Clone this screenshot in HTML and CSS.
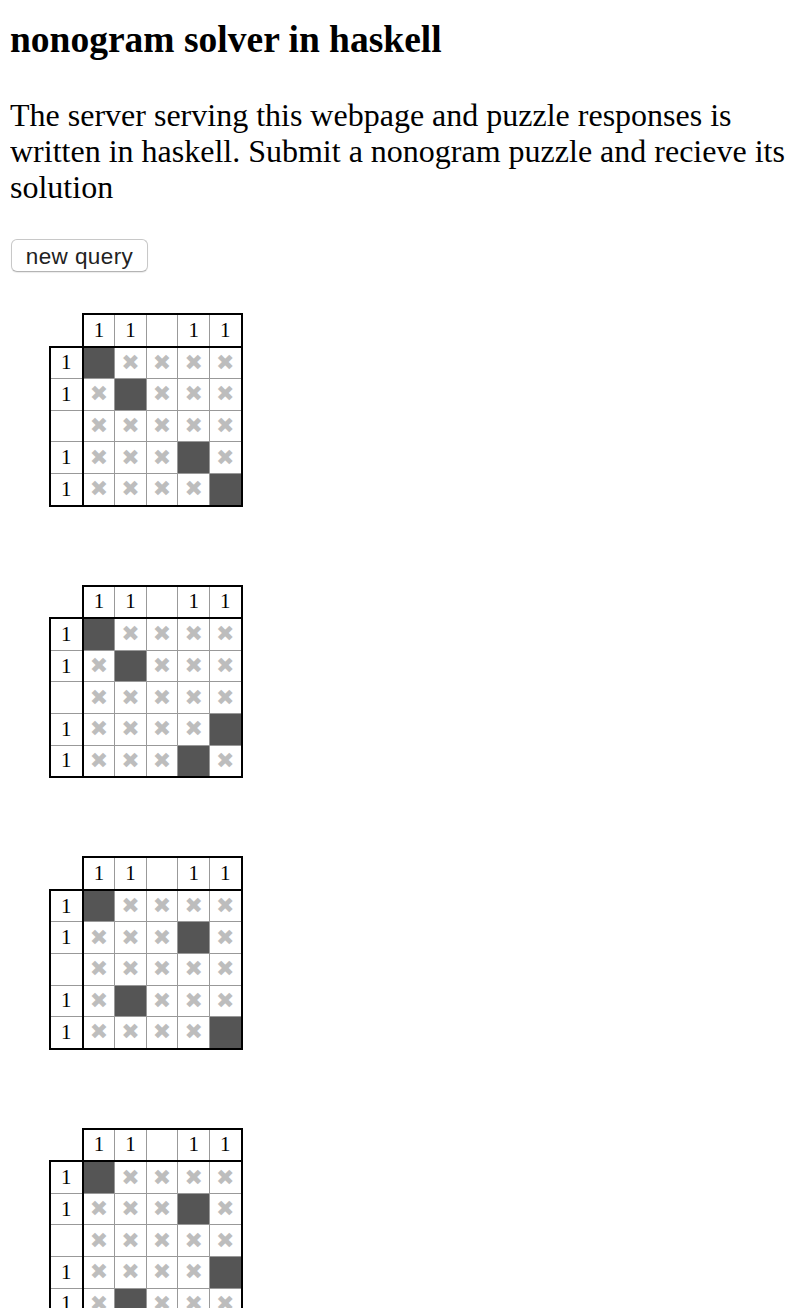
FILE: index.html
```html
<!DOCTYPE html>
<html lang="en">
  <head>
    <meta charset="UTF-8" />
    <meta name="viewport" content="width=device-width, initial-scale=1.0" />
    <title>nonogram solver</title>
    <link rel="stylesheet" href="styles.css">
  </head>
  <body>
    <h1>nonogram solver in haskell</h1>
    <p class="intro">
      The server serving this webpage and puzzle responses is written in
      haskell. Submit a nonogram puzzle and recieve its solution
    </p>
    <button class="query">new query</button>

    <section id="losninger">
      <table class="nono">
        <tr><th class="hjorne"></th><th class="kol">1</th><th class="kol">1</th><th class="kol"></th><th class="kol">1</th><th class="kol">1</th></tr>
        <tr><th class="rk">1</th><td class="fyld"></td><td class="kryds">✖</td><td class="kryds">✖</td><td class="kryds">✖</td><td class="kryds">✖</td></tr>
        <tr><th class="rk">1</th><td class="kryds">✖</td><td class="fyld"></td><td class="kryds">✖</td><td class="kryds">✖</td><td class="kryds">✖</td></tr>
        <tr><th class="rk"></th><td class="kryds">✖</td><td class="kryds">✖</td><td class="kryds">✖</td><td class="kryds">✖</td><td class="kryds">✖</td></tr>
        <tr><th class="rk">1</th><td class="kryds">✖</td><td class="kryds">✖</td><td class="kryds">✖</td><td class="fyld"></td><td class="kryds">✖</td></tr>
        <tr><th class="rk">1</th><td class="kryds">✖</td><td class="kryds">✖</td><td class="kryds">✖</td><td class="kryds">✖</td><td class="fyld"></td></tr>
      </table>

      <table class="nono">
        <tr><th class="hjorne"></th><th class="kol">1</th><th class="kol">1</th><th class="kol"></th><th class="kol">1</th><th class="kol">1</th></tr>
        <tr><th class="rk">1</th><td class="fyld"></td><td class="kryds">✖</td><td class="kryds">✖</td><td class="kryds">✖</td><td class="kryds">✖</td></tr>
        <tr><th class="rk">1</th><td class="kryds">✖</td><td class="fyld"></td><td class="kryds">✖</td><td class="kryds">✖</td><td class="kryds">✖</td></tr>
        <tr><th class="rk"></th><td class="kryds">✖</td><td class="kryds">✖</td><td class="kryds">✖</td><td class="kryds">✖</td><td class="kryds">✖</td></tr>
        <tr><th class="rk">1</th><td class="kryds">✖</td><td class="kryds">✖</td><td class="kryds">✖</td><td class="kryds">✖</td><td class="fyld"></td></tr>
        <tr><th class="rk">1</th><td class="kryds">✖</td><td class="kryds">✖</td><td class="kryds">✖</td><td class="fyld"></td><td class="kryds">✖</td></tr>
      </table>

      <table class="nono">
        <tr><th class="hjorne"></th><th class="kol">1</th><th class="kol">1</th><th class="kol"></th><th class="kol">1</th><th class="kol">1</th></tr>
        <tr><th class="rk">1</th><td class="fyld"></td><td class="kryds">✖</td><td class="kryds">✖</td><td class="kryds">✖</td><td class="kryds">✖</td></tr>
        <tr><th class="rk">1</th><td class="kryds">✖</td><td class="kryds">✖</td><td class="kryds">✖</td><td class="fyld"></td><td class="kryds">✖</td></tr>
        <tr><th class="rk"></th><td class="kryds">✖</td><td class="kryds">✖</td><td class="kryds">✖</td><td class="kryds">✖</td><td class="kryds">✖</td></tr>
        <tr><th class="rk">1</th><td class="kryds">✖</td><td class="fyld"></td><td class="kryds">✖</td><td class="kryds">✖</td><td class="kryds">✖</td></tr>
        <tr><th class="rk">1</th><td class="kryds">✖</td><td class="kryds">✖</td><td class="kryds">✖</td><td class="kryds">✖</td><td class="fyld"></td></tr>
      </table>

      <table class="nono">
        <tr><th class="hjorne"></th><th class="kol">1</th><th class="kol">1</th><th class="kol"></th><th class="kol">1</th><th class="kol">1</th></tr>
        <tr><th class="rk">1</th><td class="fyld"></td><td class="kryds">✖</td><td class="kryds">✖</td><td class="kryds">✖</td><td class="kryds">✖</td></tr>
        <tr><th class="rk">1</th><td class="kryds">✖</td><td class="kryds">✖</td><td class="kryds">✖</td><td class="fyld"></td><td class="kryds">✖</td></tr>
        <tr><th class="rk"></th><td class="kryds">✖</td><td class="kryds">✖</td><td class="kryds">✖</td><td class="kryds">✖</td><td class="kryds">✖</td></tr>
        <tr><th class="rk">1</th><td class="kryds">✖</td><td class="kryds">✖</td><td class="kryds">✖</td><td class="kryds">✖</td><td class="fyld"></td></tr>
        <tr><th class="rk">1</th><td class="kryds">✖</td><td class="fyld"></td><td class="kryds">✖</td><td class="kryds">✖</td><td class="kryds">✖</td></tr>
      </table>
    </section>
  </body>
</html>
```

FILE: styles.css
```css
body {
  margin: 8px 10px;
  font-family: "Liberation Serif", "Times New Roman", serif;
  color: #000;
  background-color: #fff;
}

h1 {
  font-size: 37.5px;
  line-height: 43px;
  margin: 10px 0 0;
}

.intro {
  font-size: 32px;
  line-height: 36px;
  margin: 36px 0 0;
}

.query {
  display: block;
  margin: 34px 0 0 1px;
  font-family: "Liberation Sans", Arial, sans-serif;
  font-size: 22.5px;
  letter-spacing: 0.4px;
  color: #222;
  background-color: #fff;
  border: 1px solid #c8c8c8;
  border-bottom-color: #b4b4b4;
  border-radius: 6px;
  padding: 2px 0 0;
  width: 137px;
  height: 33px;
  box-shadow: 0 1px 1px rgba(0, 0, 0, 0.08);
}

#losninger {
  display: flex;
  flex-direction: column;
  align-items: flex-start;
  gap: 78px;
  padding: 41px 0 0 39px;
}

.nono {
  border-collapse: collapse;
}

.nono th,
.nono td {
  width: 30.6px;
  height: 30.6px;
  padding: 0;
  border: 1px solid #999;
  text-align: center;
  vertical-align: middle;
}

.nono th {
  font-weight: normal;
  font-size: 21px;
  line-height: 1;
  background-color: #fff;
}

.nono .hjorne {
  border: none;
  background: none;
}

.nono .kol {
  border-top: 2px solid #000;
  border-bottom: 2px solid #000;
}

.nono .kol:last-child {
  border-right: 2px solid #000;
}

.nono .rk {
  border-left: 2px solid #000;
  border-right: 2px solid #000;
}

.nono tr:first-child .kol:nth-child(2) {
  border-left: 2px solid #000;
}

.nono tr:nth-child(2) .rk {
  border-top: 2px solid #000;
}

.nono tr:last-child th,
.nono tr:last-child td {
  border-bottom: 2px solid #000;
}

.nono td:last-child {
  border-right: 2px solid #000;
}

.fyld {
  background-color: #555;
}

.kryds {
  font-family: "DejaVu Sans", sans-serif;
  font-size: 22px;
  line-height: 1;
  color: #bdbdbd;
}
```
